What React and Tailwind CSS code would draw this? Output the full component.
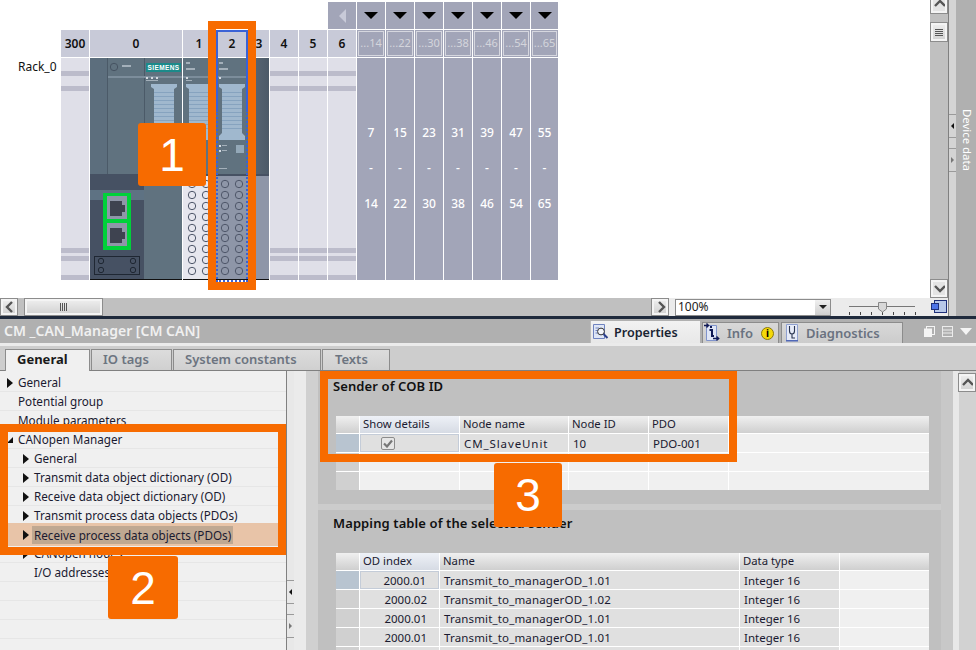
import React from "react";

const emptySlots = ["300"];
const purpleSlots = [
  { head: "...14", from: "7", to: "14" },
  { head: "...22", from: "15", to: "22" },
  { head: "...30", from: "23", to: "30" },
  { head: "...38", from: "31", to: "38" },
  { head: "...46", from: "39", to: "46" },
  { head: "...54", from: "47", to: "54" },
  { head: "...65", from: "55", to: "65", last: true },
];

const navRows = [
  { label: "General", depth: 0, arrow: true },
  { label: "Potential group", depth: 0 },
  { label: "Module parameters", depth: 0 },
  { label: "CANopen Manager", depth: 0, open: true },
  { label: "General", depth: 1, arrow: true },
  { label: "Transmit data object dictionary (OD)", depth: 1, arrow: true },
  { label: "Receive data object dictionary (OD)", depth: 1, arrow: true },
  { label: "Transmit process data objects (PDOs)", depth: 1, arrow: true },
  { label: "Receive process data objects (PDOs)", depth: 1, arrow: true, selected: true },
  { label: "CANopen nodes", depth: 1, arrow: true },
  { label: "I/O addresses", depth: 1 },
  { label: "", depth: 0 },
  { label: "", depth: 0 },
  { label: "", depth: 0 },
];

const mappingRows = [
  ["2000.01", "Transmit_to_managerOD_1.01", "Integer 16"],
  ["2000.02", "Transmit_to_managerOD_1.02", "Integer 16"],
  ["2000.01", "Transmit_to_managerOD_1.01", "Integer 16"],
  ["2000.01", "Transmit_to_managerOD_1.01", "Integer 16"],
  ["", "", ""],
];

const circleRows = [10, 21, 32, 43, 54, 64, 75, 86, 97];

function Triangle({ dir = "right", color = "#111", w = 6, h = 10 }) {
  const points = {
    right: `0,0 ${w},${h / 2} 0,${h}`,
    left: `${w},0 0,${h / 2} ${w},${h}`,
    down: `0,0 ${w},0 ${w / 2},${h}`,
    up: `0,${h} ${w},${h} ${w / 2},0`,
  }[dir];
  return (
    <svg width={w} height={h} className="shrink-0">
      <polygon points={points} fill={color} />
    </svg>
  );
}

function Chevron({ dir }) {
  const d = {
    up: "M2 9 L7 4 L12 9",
    down: "M2 4 L7 9 L12 4",
    left: "M9 2 L4 7 L9 12",
    right: "M5 2 L10 7 L5 12",
  }[dir];
  return (
    <svg width="14" height="14">
      <path d={d} fill="none" stroke="#555" strokeWidth="2.4" />
    </svg>
  );
}

function ScrollButton({ dir, className = "" }) {
  return (
    <div className={`flex items-center justify-center border-2 border-[#f4f4f4] outline outline-1 outline-[#8c8c8c] bg-gradient-to-b from-[#ececec] to-[#d4d4d4] ${className}`}>
      <Chevron dir={dir} />
    </div>
  );
}

function EmptySlot({ w = "w-[28px]" }) {
  return (
    <div className={`${w} h-full bg-[#dfdfe8] flex flex-col`}>
      <div className="h-[13px]" />
      <div className="h-[5px] bg-[#bcbccb]" />
      <div className="h-[10px]" />
      <div className="h-[5px] bg-[#bcbccb]" />
      <div className="h-[157px]" />
      <div className="h-[5px] bg-[#bcbccb]" />
      <div className="h-[3px]" />
      <div className="h-[5px] bg-[#bcbccb]" />
      <div className="h-[14px]" />
      <div className="h-[5px] bg-[#bcbccb]" />
    </div>
  );
}

function Connector({ x }) {
  const lines = [];
  for (let y = 34; y < 74; y += 4) lines.push(y);
  return (
    <g>
      <polygon
        points={`${x},26 ${x + 26},26 ${x + 26},29 ${x + 23},31 ${x + 23},75 ${x + 26},78 ${x + 26},82 ${x},82 ${x},78 ${x + 3},75 ${x + 3},31 ${x},29`}
        fill="#a0b8ce"
      />
      {lines.map((y) => (
        <rect key={y} x={x + 3} y={y} width="20" height="1" fill="#86a3bf" />
      ))}
    </g>
  );
}

function CircleRows({ a, b, offset = 116 }) {
  return (
    <g fill="none" stroke="#4e5669" strokeWidth="1">
      {circleRows.map((y) => (
        <g key={y}>
          <circle cx={a} cy={y + offset} r="3.7" />
          <circle cx={b} cy={y + offset} r="3.7" />
        </g>
      ))}
    </g>
  );
}

function Slot0() {
  return (
    <svg width="92" height="222" className="block">
      <rect width="92" height="221" fill="#60727f" />
      <rect width="17" height="116" fill="#5c6e7d" />
      <rect x="17" width="1" height="116" fill="#4b5a68" />
      <rect x="54" width="1" height="116" fill="#4b5a68" />
      <rect x="18" y="18" width="74" height="2" fill="#7c8d9b" />
      <circle cx="24" cy="9" r="3.7" fill="none" stroke="#465362" />
      <rect x="32" y="7" width="9" height="2" fill="#a4b0ba" />
      <rect x="56" y="5" width="35" height="9" fill="#1c8a8a" />
      <text x="73.5" y="12" textAnchor="middle" fontSize="6.5" fontWeight="700" fill="#fff" fontFamily="Liberation Sans, sans-serif" letterSpacing="0.4">SIEMENS</text>
      <rect x="56" y="19" width="2" height="2" fill="#d4dae0" />
      <rect x="61" y="19" width="2" height="2" fill="#d4dae0" />
      <rect x="66" y="19" width="2" height="2" fill="#d4dae0" />
      <rect x="56" y="22" width="12" height="1" fill="#a4b0ba" />
      <Connector x={61} />
      <rect x="49" y="86" width="4" height="1" fill="#a4b0ba" />
      <rect x="49" y="91" width="4" height="1" fill="#a4b0ba" />
      <rect y="116" width="54" height="105" fill="#465163" />
      <rect y="132" width="54" height="10" fill="#5e7283" />
      <rect x="13" y="135" width="28" height="57" fill="#00d13a" />
      <rect x="17" y="138" width="20" height="23" fill="#8e96a8" />
      <rect x="17" y="165" width="20" height="23" fill="#8e96a8" />
      <path d="M20 143 H32 V147 H35 V154 H32 V158 H20 Z" fill="#3e4350" />
      <path d="M20 170 H32 V174 H35 V181 H32 V185 H20 Z" fill="#3e4350" />
      <rect x="4.5" y="198.5" width="45" height="18" fill="#465163" stroke="#1f2733" />
      <g fill="none" stroke="#1f2733">
        <circle cx="11" cy="203" r="2.7" />
        <circle cx="43" cy="203" r="2.7" />
        <circle cx="11" cy="212" r="2.7" />
        <circle cx="43" cy="212" r="2.7" />
      </g>
      <rect y="221" width="92" height="1" fill="#111" />
    </svg>
  );
}

function Slot1() {
  return (
    <svg width="32" height="222" className="block">
      <rect width="32" height="116" fill="#60727f" />
      <rect x="3" y="4" width="4" height="2" fill="#a4b0ba" />
      <rect x="3" y="10" width="9" height="2" fill="#a4b0ba" />
      <rect y="18" width="32" height="2" fill="#7c8d9b" />
      <rect x="3" y="19" width="2" height="2" fill="#d4dae0" />
      <rect x="3" y="22" width="6" height="1" fill="#a4b0ba" />
      <Connector x={3} />
      <rect y="116" width="32" height="2" fill="#465163" />
      <rect y="118" width="32" height="103" fill="#e6e6ee" />
      <CircleRows a={9} b={23} offset={116} />
      <rect y="221" width="32" height="1" fill="#111" />
    </svg>
  );
}

function Slot2() {
  return (
    <svg width="32" height="222" className="block">
      <rect width="32" height="116" fill="#60727f" />
      <rect x="3" y="4" width="4" height="2" fill="#a4b0ba" />
      <rect x="3" y="10" width="9" height="2" fill="#a4b0ba" />
      <rect y="18" width="32" height="2" fill="#7c8d9b" />
      <rect x="3" y="19" width="2" height="2" fill="#d4dae0" />
      <Connector x={3} />
      <rect x="3" y="87" width="2" height="2" fill="#d4dae0" />
      <rect x="6" y="87" width="5" height="1" fill="#a4b0ba" />
      <rect x="3" y="92" width="2" height="2" fill="#d4dae0" />
      <rect x="6" y="92" width="5" height="1" fill="#a4b0ba" />
      <rect x="20" y="87" width="8" height="8" fill="#93a8b8" />
      <rect x="3" y="110" width="8" height="1" fill="#a4b0ba" />
      <rect y="116" width="32" height="2" fill="#465163" />
      <rect y="118" width="32" height="103" fill="#8e96a8" />
      <CircleRows a={9} b={23} offset={116} />
      <rect y="221" width="32" height="1" fill="#111" />
    </svg>
  );
}

function Slot3() {
  return (
    <div className="w-[20px] h-full flex flex-col">
      <div className="h-[116px] bg-gradient-to-r from-[#5a6876] to-[#4c5a68]" />
      <div className="h-[2px] bg-[#465163]" />
      <div className="flex-1 bg-[#8e96a8]" />
      <div className="h-px bg-[#111]" />
    </div>
  );
}

function HeadCell({ w = "w-[28px]", children }) {
  return (
    <div className={`${w} h-full bg-[#c8cad8] flex items-center justify-center text-[12px] font-semibold text-[#111]`}>
      {children}
    </div>
  );
}

function Rack() {
  return (
    <div className="flex h-[298px] bg-white pt-[2px]">
      <div className="w-[61px] pt-[56px] pl-[18px] text-[12px] leading-[17px] text-[#111]">Rack_0</div>
      <div className="flex flex-col">
        <div className="flex gap-px h-[27px] pl-[267px]">
          <div className="w-[28px] bg-[#a2a5b8] flex items-center justify-center">
            <Triangle dir="left" color="#c8cad8" w={7} h={14} />
          </div>
          {purpleSlots.map((s) => (
            <div key={s.head} className={`${s.last ? "w-[27px]" : "w-[28px]"} bg-[#a2a5b8] flex items-center justify-center`}>
              <Triangle dir="down" color="#000" w={14} h={7} />
            </div>
          ))}
        </div>
        <div className="flex gap-px h-[27px] mt-px">
          {emptySlots.map((s) => (
            <HeadCell key={s}>{s}</HeadCell>
          ))}
          <HeadCell w="w-[92px]">0</HeadCell>
          <HeadCell w="w-[32px]">1</HeadCell>
          <HeadCell w="w-[32px]">2</HeadCell>
          <HeadCell w="w-[20px]">3</HeadCell>
          <HeadCell>4</HeadCell>
          <HeadCell>5</HeadCell>
          <HeadCell>6</HeadCell>
          {purpleSlots.map((s) => (
            <div key={s.head} className={`${s.last ? "w-[27px]" : "w-[28px]"} h-full bg-[#a2a5b8] p-px`}>
              <div className="h-full border border-[#d6d7df] flex items-center justify-center text-[11px] text-[#d4d5dc] overflow-hidden">
                {s.head}
              </div>
            </div>
          ))}
        </div>
        <div className="flex gap-px h-[222px] mt-px">
          <EmptySlot />
          <Slot0 />
          <Slot1 />
          <Slot2 />
          <Slot3 />
          <EmptySlot />
          <EmptySlot />
          <EmptySlot />
          {purpleSlots.map((s) => (
            <div key={s.head} className={`${s.last ? "w-[27px]" : "w-[28px]"} h-full bg-[#a2a5b8] flex flex-col items-center pt-[66px] text-[12px] leading-[18px] text-white font-medium`}>
              <span>{s.from}</span>
              <span className="mt-[17px]">-</span>
              <span className="mt-[18px]">{s.to}</span>
            </div>
          ))}
        </div>
      </div>
    </div>
  );
}

function ZoomBar() {
  return (
    <div className="flex h-[18px]">
      <div className="w-[669px] bg-[#c0c0c0] flex items-center">
        <ScrollButton dir="left" className="w-[16px] h-[16px] ml-px" />
        <div className="ml-[8px] w-[77px] h-[16px] border-2 border-[#f4f4f4] outline outline-1 outline-[#8c8c8c] bg-gradient-to-b from-[#ececec] to-[#d4d4d4] flex items-center justify-center">
          <div className="flex gap-px">
            <div className="w-px h-[8px] bg-[#555]" />
            <div className="w-px h-[8px] bg-[#555]" />
            <div className="w-px h-[8px] bg-[#555]" />
            <div className="w-px h-[8px] bg-[#555]" />
          </div>
        </div>
        <ScrollButton dir="right" className="w-[16px] h-[16px] ml-auto mr-px" />
      </div>
      <div className="flex-1 bg-[#ebebeb] flex items-center pl-[6px]">
        <div className="w-[156px] h-[17px] bg-white border border-[#8c8c8c] flex items-center justify-between">
          <span className="pl-[2px] text-[12px] text-[#222]">100%</span>
          <div className="w-[15px] h-full bg-gradient-to-b from-[#f0f0f0] to-[#cfcfcf] flex items-center justify-center">
            <Triangle dir="down" color="#222" w={8} h={4} />
          </div>
        </div>
        <svg width="68" height="18" className="ml-[18px]">
          <rect x="0" y="8" width="66" height="1" fill="#777" />
          {[0, 11, 22, 33, 44, 55, 66].map((x) => (
            <rect key={x} x={x} y="14" width="1" height="3" fill="#444" />
          ))}
          <path d="M29.5 4.5 H37.5 V11 L33.5 14 L29.5 11 Z" fill="#d8d8d8" stroke="#888" />
        </svg>
      </div>
    </div>
  );
}

function VScroll() {
  return (
    <div className="w-[18px] h-full bg-[#c0c0c0] flex flex-col items-center">
      <div className="h-[13px] w-[16px] flex items-end justify-center border-2 border-t-0 border-[#f4f4f4] outline outline-1 outline-[#8c8c8c] bg-[#e4e4e4] overflow-hidden">
        <Chevron dir="up" />
      </div>
      <div className="mt-[10px] h-[18px] w-[16px] border-2 border-[#f4f4f4] outline outline-1 outline-[#8c8c8c] bg-gradient-to-b from-[#ececec] to-[#d4d4d4] flex flex-col items-center justify-center gap-px">
        <div className="w-[8px] h-px bg-[#555]" />
        <div className="w-[8px] h-px bg-[#555]" />
        <div className="w-[8px] h-px bg-[#555]" />
        <div className="w-[8px] h-px bg-[#555]" />
      </div>
      <div className="mt-auto h-[17px] w-[16px] mb-px flex items-center justify-center border-2 border-[#f4f4f4] outline outline-1 outline-[#8c8c8c] bg-[#e4e4e4]">
        <Chevron dir="down" />
      </div>
      <div className="h-[18px] w-full bg-[#ebebeb] flex items-center justify-center">
        <svg width="16" height="14">
          <rect x="3.5" y="0.5" width="12" height="12" fill="#b8c8e8" stroke="#1e2f7a" />
          <rect x="0.5" y="3.5" width="7" height="6" fill="#4d74e8" stroke="#1e2f7a" />
        </svg>
      </div>
    </div>
  );
}

function SideHandle({ dir, className = "" }) {
  return (
    <div className={`h-[24px] border-y border-[#9a9a9a] flex items-center justify-center ${className}`}>
      <Triangle dir={dir} color={dir === "left" ? "#111" : "#777"} w={3} h={6} />
    </div>
  );
}

function PropertiesIcon() {
  return (
    <svg width="16" height="16">
      <path d="M0.5 0.5 H11.5 V14.5 H0.5 Z" fill="#dfe6f6" stroke="#6f83c0" />
      <path d="M2.5 4 H6 M2.5 6.5 H5 M2.5 9 H5" stroke="#6f83c0" />
      <circle cx="8" cy="7.5" r="3.4" fill="#f4f6fb" stroke="#333" />
      <path d="M10.5 10 L14.5 14" stroke="#2b3f8a" strokeWidth="2" />
    </svg>
  );
}

function InfoIcon() {
  return (
    <svg width="16" height="20">
      <path d="M2.5 2.5 H12.5 V17.5 H2.5 Z" fill="#dfe6f6" stroke="#7f93cc" />
      <path d="M0 2.5 H4 M2.5 0.5 L4.5 2.5 L2.5 4.5" fill="none" stroke="#111a55" strokeWidth="1.4" />
      <rect x="6" y="3" width="2" height="2" fill="#111a55" />
      <path d="M5.5 7 H8 V13 H10" fill="none" stroke="#111a55" strokeWidth="2" />
      <path d="M9 15.5 H14 M12.5 13.5 L14.7 15.5 L12.5 17.5" fill="none" stroke="#111a55" strokeWidth="1.4" />
    </svg>
  );
}

function DiagnosticsIcon() {
  return (
    <svg width="14" height="20">
      <path d="M0.5 1.5 H11.5 V17.5 H0.5 Z" fill="#e6ebf8" stroke="#8fa0d0" />
      <path d="M3.5 3 V8 Q3.5 11 6 11 Q8.5 11 8.5 8 V3 M6 11 V15 H9" fill="none" stroke="#2a3550" strokeWidth="1.1" />
      <rect x="0" y="17" width="12" height="1.5" fill="#5068b8" />
    </svg>
  );
}

function InspectorBar() {
  return (
    <div className="h-[24px] bg-[#b0b0b0] flex items-end">
      <div className="flex-1 self-center -mt-[2px] pl-[4px] text-[14px] font-semibold text-[#f0f0f0]">CM _CAN_Manager [CM CAN]</div>
      <div className="w-[110px] h-[22px] flex items-center gap-[5px] pl-[2px] bg-gradient-to-b from-[#f2f2f2] to-[#e8e8e8] border-l border-[#bdbdbd]">
        <PropertiesIcon />
        <span className="text-[12.6px] font-semibold text-[#1a2433] mt-[2px]">Properties</span>
      </div>
      <div className="ml-[2px] w-[77px] h-[21px] flex items-center border border-b-0 border-[#8c8c8c] bg-gradient-to-b from-[#d8d8d8] to-[#cccccc] pl-[1px]">
        <InfoIcon />
        <span className="ml-[7px] mt-px text-[13px] font-semibold text-[#6a7280]">Info</span>
        <span className="ml-[8px] w-[13px] h-[13px] rounded-full bg-[#f5d90a] border border-[#8a7a10] flex items-center justify-center text-[10px] font-bold leading-none text-black">i</span>
      </div>
      <div className="ml-[2px] w-[122px] h-[21px] flex items-center border border-b-0 border-[#8c8c8c] bg-gradient-to-b from-[#d8d8d8] to-[#cccccc] pl-[4px]">
        <DiagnosticsIcon />
        <span className="ml-[6px] mt-px text-[13px] font-semibold text-[#6a7280]">Diagnostics</span>
      </div>
      <div className="w-[73px] self-center flex items-center pl-[21px] gap-[7px]">
        <svg width="11" height="11">
          <rect x="2.5" y="0.5" width="8" height="8" fill="none" stroke="#f4f4f4" />
          <rect x="0" y="2.5" width="8" height="8.5" fill="#f4f4f4" />
        </svg>
        <svg width="11" height="11">
          <rect x="0.5" y="0.5" width="10" height="10" fill="none" stroke="#ececec" />
          <path d="M1 4 H10 M1 7 H10" stroke="#ececec" />
        </svg>
        <Triangle dir="down" color="#f4f4f4" w={12} h={7} />
      </div>
    </div>
  );
}

function TabsRow() {
  const others = [
    { label: "IO tags", w: "w-[81px]", pad: "pl-[11px]" },
    { label: "System constants", w: "w-[148px]", pad: "pl-[11px]" },
    { label: "Texts", w: "w-[68px]", pad: "pl-[12px]" },
  ];
  return (
    <div className="h-[24px] bg-[#cdcdcd] flex items-end pl-[5px]">
      <div className="relative z-10 -mb-px w-[85px] h-[22px] pl-[11px] pb-[2px] bg-[#f0f0f0] border border-b-0 border-[#8c8c8c] flex items-center text-[13px] font-bold text-[#1a1a1a]">General</div>
      <div className="flex items-end gap-px ml-px">
        {others.map((t) => (
          <div key={t.label} className={`${t.w} ${t.pad} h-[21px] bg-gradient-to-b from-[#dcdcdc] to-[#d0d0d0] border border-b-0 border-[#8c8c8c] flex items-center text-[13px] font-semibold text-[#6c7480]`}>
            {t.label}
          </div>
        ))}
      </div>
    </div>
  );
}

function NavRow({ row }) {
  const textLeft = row.depth === 1 ? "pl-[23px]" : "pl-[7px]";
  return (
    <div className={`relative h-[19px] pt-[2px] border-b border-[#e6e6e6] flex items-center ${textLeft} text-[11.7px] text-[#1a1a30]`}>
      {row.selected && <div className="absolute left-0 right-0 -top-[2px] -bottom-[3px] bg-[#e8c4a8]" />}
      <div className="relative w-[11px] shrink-0">
        {row.arrow && <Triangle dir="right" />}
        {row.open && (
          <svg width="6" height="6" className="block">
            <polygon points="6,0 6,6 0,6" fill="#111" />
          </svg>
        )}
      </div>
      <span className={`relative whitespace-nowrap ${row.selected ? "bg-[#bfa892] px-[2px] -ml-[2px] leading-[18px]" : ""}`}>{row.label}</span>
    </div>
  );
}

function NavPanel() {
  return (
    <div className="w-[286px] h-full bg-[#f0f0f0] pt-[2px] overflow-hidden">
      {navRows.map((row, i) => (
        <NavRow key={i} row={row} />
      ))}
    </div>
  );
}

function HeaderCell({ active, children }) {
  return (
    <div className={`h-[17px] flex items-center pl-[3px] text-[11.3px] text-[#1a1a30] bg-gradient-to-b ${active ? "from-[#eef1f7] to-[#d6dbe4]" : "from-[#f0f0f0] to-[#cfcfcf]"}`}>
      {children}
    </div>
  );
}

function SenderTable() {
  const blank = "h-[18px] bg-[#f0f0f0]";
  const cell = "h-[18px] pt-[2px] bg-[#e0e0e0] flex items-center pl-[4px] text-[11.5px] text-[#1a1a30]";
  return (
    <div className="ml-[18px] w-[593px] grid grid-cols-[23px_99px_108px_79px_79px_1fr] gap-px bg-white">
      <HeaderCell />
      <HeaderCell active>Show details</HeaderCell>
      <HeaderCell>Node name</HeaderCell>
      <HeaderCell>Node ID</HeaderCell>
      <HeaderCell>PDO</HeaderCell>
      <HeaderCell />

      <div className="h-[18px] bg-[#b8c4d0]" />
      <div className="h-[18px] bg-[#e0e0e0] border border-[#c4ccd8] flex items-center pl-[20px]">
        <div className="w-[14px] h-[13px] rounded-[2px] border border-[#8c8c8c] bg-[#e6e6e6] flex items-center justify-center">
          <svg width="10" height="9">
            <path d="M1 4.5 L4 7.5 L9 1.5" fill="none" stroke="#777" strokeWidth="2.2" />
          </svg>
        </div>
      </div>
      <div className={`${cell} tracking-[0.9px]`}>CM_SlaveUnit</div>
      <div className={cell}>10</div>
      <div className={cell}>PDO-001</div>
      <div className={blank} />

      {[0, 1].map((r) => (
        <React.Fragment key={r}>
          <div className="h-[18px] bg-[#d0d0d0]" />
          <div className={blank} />
          <div className={blank} />
          <div className={blank} />
          <div className={blank} />
          <div className={blank} />
        </React.Fragment>
      ))}
    </div>
  );
}

function MappingTable() {
  const cell = "h-[18px] pt-[2px] bg-[#e0e0e0] flex items-center text-[11.5px] text-[#1a1a30]";
  return (
    <div className="ml-[18px] w-[593px] grid grid-cols-[23px_79px_299px_99px_1fr] gap-px bg-white">
      <HeaderCell />
      <HeaderCell active>OD index</HeaderCell>
      <HeaderCell>Name</HeaderCell>
      <HeaderCell>Data type</HeaderCell>
      <HeaderCell />
      {mappingRows.map((r, i) => (
        <React.Fragment key={i}>
          <div className={`h-[18px] ${i === 0 ? "bg-[#b8c4d0]" : "bg-[#d0d0d0]"}`} />
          <div className={`${cell} justify-end pr-[12px] ${i === 0 ? "border border-[#c4ccd8]" : ""}`}>{r[0]}</div>
          <div className={`${cell} pl-[4px] tracking-[0.15px]`}>{r[1]}</div>
          <div className={`${cell} pl-[4px]`}>{r[2]}</div>
          <div className="h-[18px] bg-[#f0f0f0]" />
        </React.Fragment>
      ))}
    </div>
  );
}

function SectionTitle({ children }) {
  return <div className="pl-[15px] h-[18px] leading-[18px] text-[13px] font-semibold tracking-[0.1px] text-[#111]">{children}</div>;
}

function Inspector() {
  return (
    <div className="flex h-[280px] border-t border-[#808080] overflow-hidden">
      <NavPanel />
      <div className="w-[8px] h-full bg-[#e8e8e8] border-l border-[#808080] flex flex-col pt-[209px]">
        <SideHandle dir="left" />
        <SideHandle dir="right" className="mt-[10px]" />
      </div>
      <div className="w-[12px] h-full bg-[#ebebeb]" />
      <div className="w-[12px] h-full bg-[#d0d0d0]" />
      <div className="w-[623px] h-full flex flex-col bg-[#c0c0c0] overflow-hidden">
        <div className="h-[133px] shrink-0 pt-[6px]">
          <SectionTitle>Sender of COB ID</SectionTitle>
          <div className="h-[21px]" />
          <SenderTable />
        </div>
        <div className="h-[6px] shrink-0 bg-[#cccccc]" />
        <div className="shrink-0 pt-[4px]">
          <SectionTitle>Mapping table of the selected sender</SectionTitle>
          <div className="h-[21px]" />
          <MappingTable />
        </div>
      </div>
      <div className="w-[12px] h-full bg-[#c8c8c8]" />
      <div className="w-[6px] h-full bg-[#e8e8e8]" />
      <div className="flex-1 h-full bg-[#d2d2d2] pt-[3px]">
        <ScrollButton dir="up" className="w-[16px] h-[17px]" />
      </div>
    </div>
  );
}

function OrangeBadge({ className, children }) {
  return (
    <div className={`absolute rounded-[3px] bg-[#f76b00] text-white flex items-center justify-center text-[46px] font-['Liberation_Sans',sans-serif] leading-none ${className}`}>
      {children}
    </div>
  );
}

export default function App() {
  return (
    <div className="relative w-[976px] h-[650px] overflow-hidden bg-white font-['Noto_Sans',sans-serif]">
      <div className="flex h-[316px]">
        <div className="w-[933px] flex flex-col">
          <Rack />
          <ZoomBar />
        </div>
        <VScroll />
        <div className="w-[1px] bg-[#808080]" />
        <div className="w-[7px] bg-[#d4d4d4] flex flex-col pt-[114px]">
          <SideHandle dir="left" />
          <SideHandle dir="right" className="mt-[10px]" />
        </div>
        <div className="flex-1 bg-[#b0b0b0] flex justify-center pt-[109px] pl-[3px]">
          <span className="[writing-mode:vertical-rl] text-[11.4px] text-white leading-[17px]">Device data</span>
        </div>
      </div>
      <div className="h-[3px] bg-[#1f2a3c]" />
      <InspectorBar />
      <div className="h-[3px] bg-[#ebebeb]" />
      <TabsRow />
      <Inspector />

      {/* selected slot marker and the orange callouts */}
      <div className="absolute left-[216px] top-[30px] w-[32px] h-[80px] border-2 border-b-0 border-[#3a62d6]" />
      <div className="absolute left-[216px] top-[110px] w-[32px] h-[172px] border-2 border-t-0 border-dotted border-[#3a62d6]" />
      <div className="absolute left-[208px] top-[21px] w-[48px] h-[269px] border-[8px] border-[#f76b00]" />
      <div className="absolute left-0 top-[424px] w-[286px] h-[131px] border-[8px] border-[#f76b00]" />
      <div className="absolute left-[320px] top-[371px] w-[417px] h-[91px] border-[8px] border-[#f76b00]" />
      <OrangeBadge className="left-[138px] top-[123px] w-[68px] h-[63px]">1</OrangeBadge>
      <OrangeBadge className="left-[108px] top-[556px] w-[70px] h-[63px]">2</OrangeBadge>
      <OrangeBadge className="left-[494px] top-[463px] w-[68px] h-[64px]">3</OrangeBadge>
    </div>
  );
}
